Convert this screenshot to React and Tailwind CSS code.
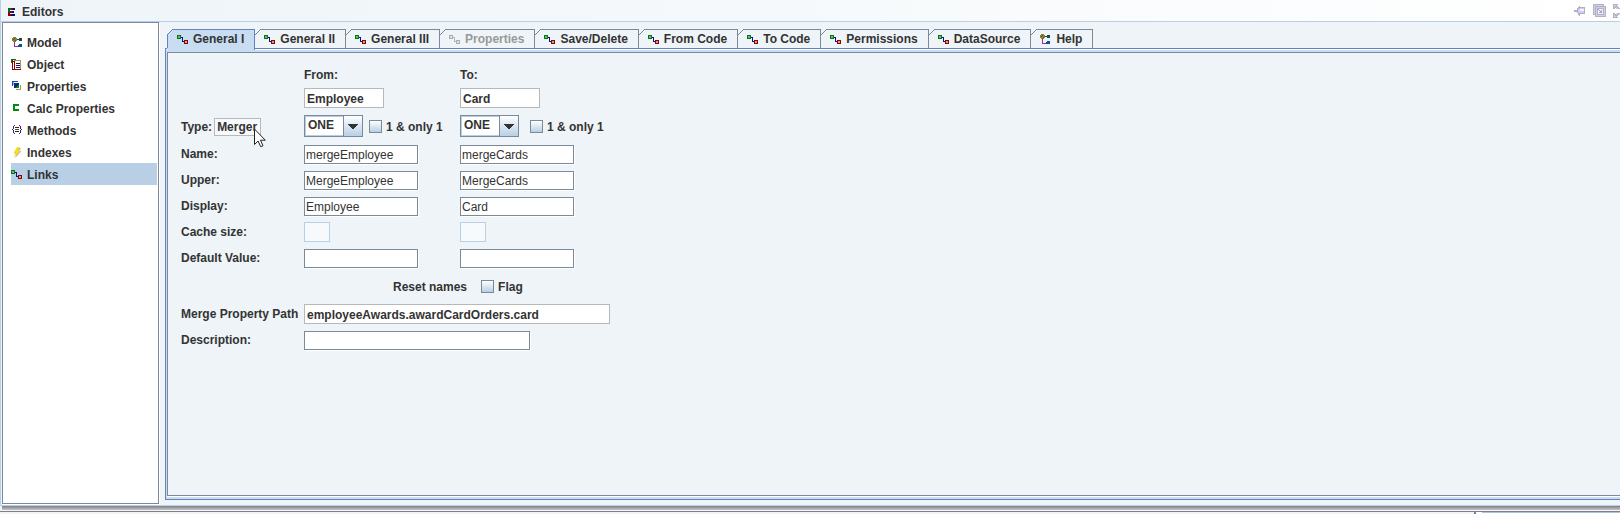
import React from 'react';

function LinkIcon({ muted = false }) {
  const a = muted ? '#a9aeb3' : '#007a10';
  const b = muted ? '#b4b8bc' : '#10108c';
  const c = muted ? '#a9aeb3' : '#8c0010';
  return (
    <svg width="11" height="9" viewBox="0 0 11 9" shapeRendering="crispEdges" className="shrink-0" aria-hidden="true">
      <path fill={a} d="M0 0h4v4H0z" />
      <path fill={muted ? '#dfe3e6' : '#7cb46c'} d="M1 1h2v2H1z" />
      <path fill={b} d="M4 2h2v1H4zM5 3h1v3H5zM5 6h2v1H5z" />
      <path fill={c} d="M7 5h4v4H7z" />
      <path fill={muted ? '#dfe3e6' : '#d0a860'} d="M8 6h2v2H8z" />
    </svg>
  );
}

function ModelIcon() {
  return (
    <svg width="11" height="11" viewBox="0 0 11 11" shapeRendering="crispEdges" className="shrink-0" aria-hidden="true">
      <path fill="#8a8438" d="M1 0h3v1h1v3H4v1H1V4H0V1h1z" />
      <path fill="#55501c" d="M2 1h1v1H2zM1 2h1v1H1zM3 3h1v1H3z" />
      <path fill="#1c4a4a" d="M5 2h2v1H5zM7 1h3v3H7z" />
      <path fill="#9c2ca0" d="M2 5h1v4h3v1H2z" />
      <path fill="#10508c" d="M6 8h1V7h3v3H6z" />
    </svg>
  );
}

function ObjectIcon() {
  return (
    <svg width="11" height="11" viewBox="0 0 11 11" shapeRendering="crispEdges" className="shrink-0" aria-hidden="true">
      <path fill="#fffbe6" d="M3 2h6v8H3z" />
      <path fill="#007a10" d="M0 0h5v1H1v3H0z" />
      <path fill="#8c0010" d="M1 1h1v9h8v1H1zM2 2h1v1H2z" />
      <path fill="#a49c38" d="M3 1h7v1H3zM9 2h1v8H9z" />
      <path fill="#8c0010" d="M3 2h1v8H3z" />
      <path fill="#10108c" d="M5 4h4v1H5zM5 6h4v1H5zM5 8h4v1H5z" />
    </svg>
  );
}

function PropertiesIcon() {
  return (
    <svg width="10" height="10" viewBox="0 0 10 10" shapeRendering="crispEdges" className="shrink-0" aria-hidden="true">
      <path fill="#1c4ca8" d="M0 0h6v1H1v4H0z" />
      <path fill="#8ab4e0" d="M1 1h1v3H1z" />
      <path fill="#00308c" d="M2 2h5v2H6v1H5v1H4v1H2z" />
      <path fill="#108030" d="M7 3v4H4V6h1V5h1V4h1z" />
      <path fill="#a49c38" d="M8 4h1v5H4V8h4z" />
    </svg>
  );
}

function CalcIcon() {
  return (
    <svg width="10" height="10" viewBox="0 0 10 10" shapeRendering="crispEdges" className="shrink-0" aria-hidden="true">
      <path fill="#008a10" d="M1 1h6v2H3v3h4v2H1z" />
    </svg>
  );
}

function MethodsIcon() {
  return (
    <svg width="11" height="10" viewBox="0 0 11 10" shapeRendering="crispEdges" className="shrink-0" aria-hidden="true">
      <path fill="#28288c" d="M2 0h1v1H2zM1 1h1v3H1zM0 4h1v1H0zM1 5h1v3H1zM2 8h1v1H2zM7 0h1v1H7zM8 1h1v3H8zM9 4h1v1H9zM8 5h1v3H8zM7 8h1v1H7z" />
      <path fill="#8c0010" d="M3 2h4v1H3z" />
      <path fill="#007a10" d="M3 4h4v1H3z" />
      <path fill="#8c0010" d="M3 6h4v1H3z" />
    </svg>
  );
}

function IndexesIcon() {
  return (
    <svg width="10" height="11" viewBox="0 0 10 11" className="shrink-0" aria-hidden="true">
      <path fill="#b4b4a4" d="M6 1h3L7 4h2.500L3 11l1.500-4H2.500z" />
      <path fill="#f4e020" d="M5 0h3L6 3.500h3L1.500 10.500 4 6H1.500z" />
    </svg>
  );
}

function EditorsIcon() {
  return (
    <svg width="7" height="8" viewBox="0 0 7 8" shapeRendering="crispEdges" className="shrink-0" aria-hidden="true">
      <path fill="#007010" d="M0 0h3v2H2v2H0z" />
      <path fill="#8c0010" d="M0 4h2v2h1v2H0z" />
      <path fill="#6c1030" d="M3 0h4v2H3zM2 3h4v2H2z" />
      <path fill="#10106c" d="M5 0h2v2H5zM4 3h2v2H4zM3 6h4v2H3z" />
    </svg>
  );
}

function PinIcon() {
  return (
    <svg width="12" height="10" viewBox="0 0 12 10" shapeRendering="crispEdges" aria-hidden="true">
      <path fill="#b0b0b8" d="M0 4h3V2h1V1h1V0h1v1h5v7H6v2H5V9H4V7H3V6H0z" />
      <path fill="#ccccff" d="M4 3h1v4H4zM5 2h5v5H5z" />
      <path fill="#f4f4ff" d="M6 3h4v2H6z" />
    </svg>
  );
}

function RestoreIcon() {
  return (
    <svg width="13" height="13" viewBox="0 0 13 13" shapeRendering="crispEdges" aria-hidden="true">
      <path fill="#b4b4b8" d="M0 0h11v2h2v11H2v-2H0z" />
      <path fill="#ccccff" d="M1 1h9v1H1zM1 2h1v8H1zM3 3h9v9H3z" />
      <path fill="#b4b4b8" d="M4 4h7v7H4z" />
      <path fill="#f0f0fa" d="M5 5h5v5H5z" />
      <path fill="#a8a8b0" d="M5 5h1v1H5zM6 6h1v1H6zM7 7h1v1H7zM8 6h1v3H6V8h2z" />
    </svg>
  );
}

function ExpandIcon() {
  return (
    <svg width="7" height="14" viewBox="0 0 7 14" shapeRendering="crispEdges" aria-hidden="true">
      <path fill="#b4b4b8" d="M0 0h5v1H4v1h1v1h1v1h1v1H5V4H4V3H3v1H2v1H0z" />
      <path fill="#ccccff" d="M1 1h2v1H2v1H1zM3 3h1v1h1v1H3z" />
      <path fill="#b4b4b8" d="M0 14h5v-1H4v-1h1v-1h1v-1h1V9H5v1H4v1H3v-1H2V9H0z" />
      <path fill="#ccccff" d="M1 13h2v-1H2v-1H1zM3 11h1v-1h1V9H3z" />
    </svg>
  );
}

function Pointer() {
  return (
    <svg width="12" height="20" viewBox="0 0 12 20" className="pointer-events-none absolute left-10 top-2.5 z-10" aria-hidden="true">
      <path fill="#fff" stroke="#222" strokeWidth="1" d="M.5 1v15.500l3.600-3.500 2.600 5.700 2.300-1-2.500-5.500h4.800z" />
    </svg>
  );
}

const NAV = [
  ['Model', ModelIcon],
  ['Object', ObjectIcon],
  ['Properties', PropertiesIcon],
  ['Calc Properties', CalcIcon],
  ['Methods', MethodsIcon],
  ['Indexes', IndexesIcon],
  ['Links', LinkIcon],
];

const TABS = ['General I', 'General II', 'General III', 'Properties', 'Save/Delete', 'From Code', 'To Code', 'Permissions', 'DataSource', 'Help'];

function Tab({ label }) {
  const selected = label === 'General I';
  const disabled = label === 'Properties';
  return (
    <button
      type="button"
      role="tab"
      aria-selected={selected}
      disabled={disabled}
      className={'flex shrink-0 ' + (selected ? 'relative z-10 -mb-0.5 h-[21px]' : 'h-[19px]')}
    >
      <svg width="6" height="100%" className="shrink-0" shapeRendering="crispEdges" aria-hidden="true">
        {selected && <path fill="#c8ddf2" d="M6 0v21H0V6z" />}
        {selected && <path fill="#6382bf" d="M0 6h1v13H0z" />}
        <path fill={selected ? '#6382bf' : '#7a8a99'} d="M0 5h1v1H0zM1 4h1v1H1zM2 3h1v1H2zM3 2h1v1H3zM4 1h1v1H4zM5 0h1v1H5z" />
      </svg>
      <span
        className={
          'flex items-center gap-[5px] border-t border-r pr-[10px] ' +
          (selected ? 'h-[21px] border-[#6382bf] bg-[#c8ddf2] pb-0.5 pl-1' : 'h-[19px] border-[#7a8a99] pl-[3px]') +
          (disabled ? ' text-[#999999]' : '')
        }
      >
        {label === 'Help' ? <ModelIcon /> : <LinkIcon muted={disabled} />}
        <span className="whitespace-nowrap">{label}</span>
      </span>
    </button>
  );
}

function Field({ label, value = '', width = 'w-[114px]' }) {
  return (
    <input
      aria-label={label}
      defaultValue={value}
      className={'h-[19px] border border-[#7a8a99] bg-white px-px pt-px font-normal shadow-[1px_1px_0_#fff] outline-none ' + width}
    />
  );
}

function ReadOnly({ label, value, className }) {
  return (
    <input
      aria-label={label}
      readOnly
      value={value}
      className={'border border-[#b8b8b8] bg-white px-0.5 pt-px font-bold outline-none ' + className}
    />
  );
}

function SmallField({ label }) {
  return <input aria-label={label} disabled className="h-5 w-[26px] border border-[#b8cfe5] bg-[#f7fafd]" />;
}

function Combo({ label }) {
  return (
    <div className="relative h-[22px] w-[59px] shrink-0">
      <select
        aria-label={label}
        className="h-full w-full appearance-none border border-[#7a8a99] bg-white pl-[3px] pb-0.5 font-bold shadow-[inset_0_0_0_1px_#b8cfe5] outline-none"
      >
        <option>ONE</option>
        <option>MANY</option>
      </select>
      <span className="pointer-events-none absolute top-0 right-0 flex h-full w-5 items-center justify-center border border-[#7a8a99] bg-linear-to-b from-white to-[#b8cfe5]">
        <svg width="10" height="5" viewBox="0 0 10 5" shapeRendering="crispEdges" aria-hidden="true">
          <path fill="#333" d="M0 0h10v1H9v1H8v1H7v1H6v1H4V4H3V3H2V2H1V1H0z" />
        </svg>
      </span>
    </div>
  );
}

function Check({ label }) {
  return (
    <label className="flex items-center gap-1 whitespace-nowrap">
      <input type="checkbox" className="size-[13px] shrink-0 appearance-none border border-[#7a8a99] bg-linear-to-b from-white to-[#b8cfe5]" />
      <span className="pt-0.5">{label}</span>
    </label>
  );
}

function Row({ label, children }) {
  return (
    <div className="grid grid-cols-[123px_156px_1fr] items-center">
      <div className="whitespace-nowrap">{label}</div>
      {children}
    </div>
  );
}

export default function App() {
  return (
    <div className="flex min-h-screen flex-col overflow-hidden bg-[#eef4f8] font-['Liberation_Sans',Arial,sans-serif] text-[12px] leading-4 font-bold text-[#333333]">
      <div className="flex flex-1 flex-col border-l border-[#b8cfe5]">
        <header className="flex h-[22px] items-center justify-between border-b border-[#b8cfe5] bg-linear-to-r from-[#eef4f8] to-white pl-[7px]">
          <h1 className="flex items-center gap-[7px] pt-0.5">
            <EditorsIcon />
            Editors
          </h1>
          <div className="flex items-center gap-[7px]">
            <button type="button" aria-label="Pin"><PinIcon /></button>
            <button type="button" aria-label="Restore"><RestoreIcon /></button>
            <button type="button" aria-label="Expand"><ExpandIcon /></button>
          </div>
        </header>

        <div className="flex flex-1">
          <nav className="ml-px w-[157px] shrink-0 border border-[#7a8a99] bg-white pt-2 pr-px pl-2 shadow-[1px_1px_0_#fff]">
            <ul>
              {NAV.map(([name, Icon]) => (
                <li key={name}>
                  <a href={'#' + name} className={'flex h-[22px] items-center ' + (name === 'Links' ? 'bg-[#b8cfe5]' : '')}>
                    <span className={'flex w-4 shrink-0 ' + (name === 'Links' || name === 'Object' ? '' : 'pl-px')}>
                      <Icon />
                    </span>
                    <span className="pt-0.5">{name}</span>
                  </a>
                </li>
              ))}
            </ul>
          </nav>

          <main className="flex min-w-0 flex-1 flex-col pt-[7px] pb-1 pl-1.5">
            <div role="tablist" className="flex pl-0.5">
              {TABS.map((t) => (
                <Tab key={t} label={t} />
              ))}
            </div>
            <div className="flex flex-1 flex-col border-y border-l border-[#6382bf] bg-[#c8ddf2] pt-[3px] pb-[3px] pl-px shadow-[inset_0_1px_0_#fff]">
              <form className="flex flex-1 flex-col border-y border-l border-[#7a8a99] bg-[#eef4f8] pt-[11px] pl-[13px] shadow-[0_1px_0_#fff]">
                <Row>
                  <div className="h-5 pt-[3px]">From:</div>
                  <div className="h-5 pt-[3px]">To:</div>
                </Row>
                <div className="mt-1">
                  <Row>
                    <ReadOnly label="From" value="Employee" className="h-5 w-20" />
                    <ReadOnly label="To" value="Card" className="h-5 w-20" />
                  </Row>
                </div>
                <div className="my-[7px]">
                  <Row
                    label={
                      <div className="flex items-center gap-0.5 pt-px">
                        <label htmlFor="type">Type:</label>
                        <div className="relative flex">
                          <input id="type" readOnly value="Merger" className="h-[18px] w-[47px] border border-[#b8b8b8] bg-[#f7fafd] px-0.5 font-bold outline-none" />
                          <Pointer />
                        </div>
                      </div>
                    }
                  >
                    <div className="flex items-center gap-1.5">
                      <Combo label="From cardinality" />
                      <Check label="1 & only 1" />
                    </div>
                    <div className="flex items-center gap-[11px]">
                      <Combo label="To cardinality" />
                      <Check label="1 & only 1" />
                    </div>
                  </Row>
                </div>
                <div className="flex flex-col gap-1.5 *:h-5">
                  <Row label="Name:">
                    <Field label="From name" value="mergeEmployee" />
                    <Field label="To name" value="mergeCards" />
                  </Row>
                  <Row label="Upper:">
                    <Field label="From upper" value="MergeEmployee" />
                    <Field label="To upper" value="MergeCards" />
                  </Row>
                  <Row label="Display:">
                    <Field label="From display" value="Employee" />
                    <Field label="To display" value="Card" />
                  </Row>
                  <Row label="Cache size:">
                    <SmallField label="From cache size" />
                    <SmallField label="To cache size" />
                  </Row>
                  <Row label="Default Value:">
                    <Field label="From default value" />
                    <Field label="To default value" />
                  </Row>
                </div>
                <div className="my-2 flex h-5 items-center gap-3.5 pl-[212px]">
                  <button type="button" className="pt-0.5 whitespace-nowrap">Reset names</button>
                  <Check label="Flag" />
                </div>
                <div className="flex flex-col gap-1.5 *:h-5">
                  <Row label="Merge Property Path">
                    <div className="col-span-2 flex">
                      <ReadOnly label="Merge Property Path" value="employeeAwards.awardCardOrders.card" className="h-5 w-[306px]" />
                    </div>
                  </Row>
                  <Row label="Description:">
                    <div className="col-span-2 flex">
                      <Field label="Description" width="w-[226px]" />
                    </div>
                  </Row>
                </div>
              </form>
            </div>
          </main>
        </div>
        <div className="mt-px h-px bg-[#b8cfe5]" />
      </div>
      <footer>
        <div className="ml-0.5 h-1 bg-linear-to-b from-[#7d8087] to-[#c4c6cc]" />
        <div className="h-px bg-[#f4f4f6]" />
        <div className="h-px bg-[#7f7f84]" />
        <div className="flex h-0.5 justify-end">
          <div className="w-[146px] border-l-2 border-[#7f7f84] bg-white pl-1.5">
            <div className="h-px bg-[#a9c4e0]" />
          </div>
        </div>
      </footer>
    </div>
  );
}
